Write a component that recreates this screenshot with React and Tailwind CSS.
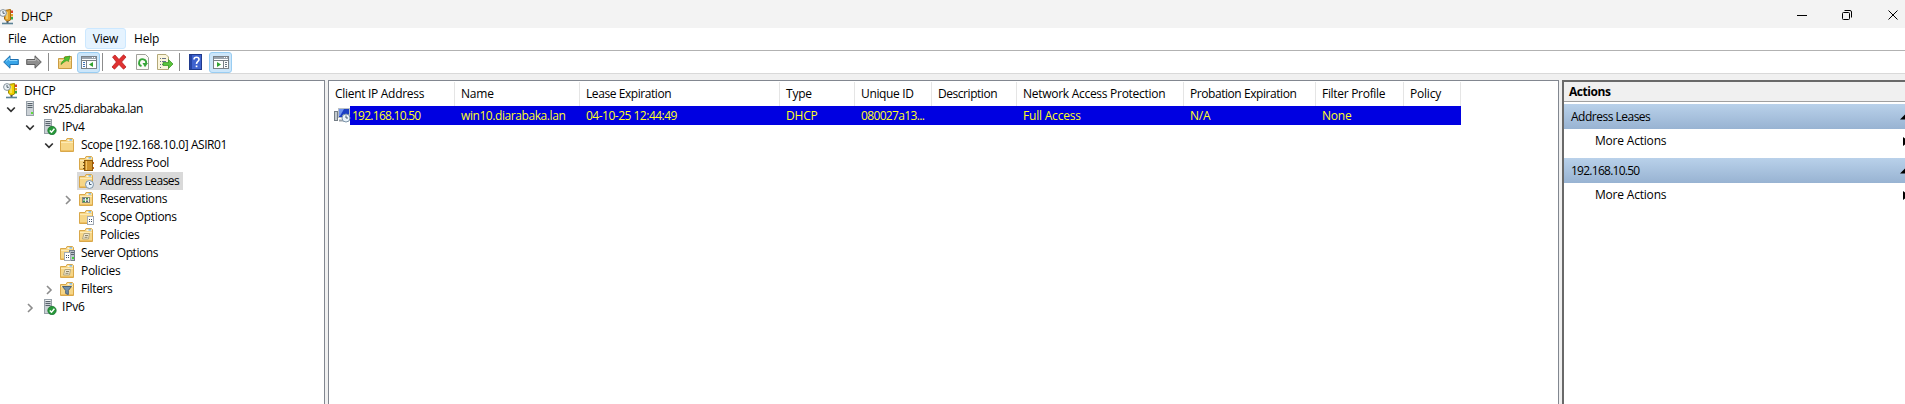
const tracking = {
  "192.168.10.50": "tracking-[-0.74px]",
  "04-10-25 12:44:49": "tracking-[-0.5px]",
  "win10.diarabaka.lan": "tracking-[-0.42px]",
  "080027a13...": "tracking-[-0.65px]",
  "srv25.diarabaka.lan": "tracking-[-0.5px]",
  "Scope [192.168.10.0] ASIR01": "tracking-[-0.43px]",
  "Address Pool": "tracking-[-0.35px]",
  "Address Leases": "tracking-[-0.5px]",
  "Reservations": "tracking-[-0.4px]",
  "Scope Options": "tracking-[-0.33px]",
  "Server Options": "tracking-[-0.45px]",
  "Policies": "tracking-[-0.3px]",
  "Filters": "tracking-[-0.35px]",
  "Client IP Address": "tracking-[-0.3px]",
  "Lease Expiration": "tracking-[-0.43px]",
  "Unique ID": "tracking-[-0.35px]",
  "Description": "tracking-[-0.45px]",
  "Network Access Protection": "tracking-[-0.28px]",
  "Probation Expiration": "tracking-[-0.44px]",
  "Filter Profile": "tracking-[-0.3px]",
};

const T = ({ children, className = "" }) => (
  <span className={"whitespace-pre leading-[18px] " + (tracking[children] || "") + " " + className}>{children}</span>
);

const Svg = ({ w = 16, h = 16, children, className = "" }) => (
  <svg width={w} height={h} viewBox={`0 0 ${w} ${h}`} className={"shrink-0 " + className}>{children}</svg>
);

const FolderShape = () => (
  <>
    <path d="M1.5 3.5 L1.5 14.5 L14.5 14.5 L14.5 2.5 L13.5 1.5 L8 1.5 L7 3.5 Z" fill="#f6d687" stroke="#d9a84a" />
    <path d="M8.500 2.500 h5 v1.500 h-5z" fill="#fdf6df" />
    <path d="M10.500 2.300 h2.500 v1.200 h-2.500z" fill="#5aa7e8" />
    <path d="M2 5.500 H14" stroke="#fdeab5" />
    <path d="M2 13.500 H14" stroke="#eebf62" />
  </>
);

const Clock = ({ cx, cy, r = 4 }) => (
  <>
    <circle cx={cx} cy={cy} r={r} fill="#eaf4fc" stroke="#7c93a8" />
    <path d={`M${cx} ${cy - r + 1.500} V${cy} H${cx + 2}`} stroke="#34495e" fill="none" strokeWidth="0.900" />
  </>
);

const Folder = ({ kind }) => (
  <Svg>
    <FolderShape />
    {kind === "pool" && (
      <>
        <rect x="6.500" y="5.500" width="8" height="10" fill="#d0932c" stroke="#8d5a0c" />
        <path d="M8.500 6 V15" stroke="#f3c566" />
        <path d="M15.500 7 v2 M15.500 12 v2" stroke="#c8641e" />
        <path d="M5 7.500 h2 M5 10.500 h2 M5 13.500 h2" stroke="#6d4a12" />
      </>
    )}
    {kind === "lease" && <Clock cx={11.5} cy={11.5} />}
    {kind === "res" && (
      <>
        <rect x="4.500" y="6.500" width="7" height="5" fill="#eef1ea" stroke="#8a8a78" />
        <rect x="5" y="7" width="2" height="1.500" fill="#4b6a96" />
        <rect x="8" y="7" width="2" height="1.500" fill="#35903a" />
        <rect x="5" y="9.500" width="2" height="1.500" fill="#2f9440" />
        <rect x="8" y="9.500" width="2" height="1.500" fill="#56657d" />
      </>
    )}
    {(kind === "opt" || kind === "srvopt") && (
      <>
        {kind === "srvopt" && (
          <>
            <rect x="10.500" y="5.500" width="5" height="10" fill="#b9c3cb" stroke="#75818b" />
            <path d="M12 7.500h3M12 9.500h3" stroke="#59636c" />
            <rect x="13" y="12" width="2" height="2" fill="#41d13d" />
          </>
        )}
        <g transform={kind === "srvopt" ? "translate(-4 0)" : ""}>
          <rect x="9.500" y="7.500" width="6" height="8" fill="#fff" stroke="#a3abb5" />
          <path d="M11 10.500h1M13 10.500h1M11 12.500h1M13 12.500h1" stroke="#3d4d66" />
        </g>
      </>
    )}
    {kind === "pol" && (
      <>
        <path d="M6 6.500 H11.500 L10.500 12 H4.500 Z" fill="#f2ead2" stroke="#b3a680" />
        <path d="M7 8.500 h3 M6.500 10.300 h3" stroke="#8d8264" />
      </>
    )}
    {kind === "filter" && (
      <path d="M3.500 5.500 H12.500 L9.300 9.500 V13.500 L6.700 12.500 V9.500 Z" fill="#7391ad" stroke="#3f566d" strokeWidth="0.900" />
    )}
  </Svg>
);

const Tower = () => (
  <>
    <rect x="1.500" y="0.500" width="7" height="14" fill="#cbd1d6" stroke="#98a1a9" />
    <path d="M2.500 2.500h5M2.500 4.500h5M2.500 6.500h5" stroke="#59636c" />
    <path d="M2.500 1.500h5" stroke="#f1f4f6" />
    <rect x="6" y="11" width="2" height="2" fill="#5fdd3a" />
  </>
);

const Server = ({ check }) => (
  <Svg w={check ? 14 : 10}>
    <Tower />
    {check && (
      <>
        <circle cx="9" cy="11.500" r="4.200" fill="#27983a" stroke="#12702a" strokeWidth="0.700" />
        <path d="M6.800 11.500 L8.500 13.300 L11.400 9.800" stroke="#fff" strokeWidth="1.400" fill="none" />
      </>
    )}
  </Svg>
);

const DhcpIcon = ({ gold = "#f0d000", edge = "#a08c00" }) => (
  <Svg>
    <path d="M5.500 1.500 L11.500 0.500 V11 L8 12.500 L5.500 10 Z" fill={gold} stroke={edge} />
    <path d="M8 3 V10" stroke="#fff0a0" />
    <rect x="12" y="1.500" width="2" height="2.500" fill="#d9412b" />
    <rect x="12" y="5" width="2" height="2.500" fill="#e8a023" />
    <rect x="12" y="8" width="2" height="2.500" fill="#3ba542" />
    <path d="M8.500 12 V14" stroke="#555" strokeWidth="2" />
    <path d="M3 14.500 H14" stroke="#5b8296" strokeWidth="1.600" />
    <circle cx="4" cy="4" r="3.400" fill="#edf3f7" stroke="#86929b" />
    <path d="M4 2 V4.300 H5.800" stroke="#43525c" fill="none" strokeWidth="0.900" />
  </Svg>
);

const Chevron = ({ open }) => (
  <Svg w={10} h={10} className="mt-[2px]">
    {open ? (
      <path d="M1.200 2.500 L5 6.300 L8.800 2.500" fill="none" stroke="#303030" strokeWidth="1.700" />
    ) : (
      <path d="M3 1 L7 5 L3 9" fill="none" stroke="#8c8c8c" strokeWidth="1.600" />
    )}
  </Svg>
);

const tree = [
  { pad: "pl-[6px]", open: true, icon: <Server />, text: "srv25.diarabaka.lan", iconBox: "w-[17px] pl-[4px]" },
  { pad: "pl-[25px]", open: true, icon: <Server check />, text: "IPv4", iconBox: "w-[17px] pl-[3px]" },
  { pad: "pl-[44px]", open: true, icon: <Folder />, text: "Scope [192.168.10.0] ASIR01" },
  { pad: "pl-[63px]", icon: <Folder kind="pool" />, text: "Address Pool" },
  { pad: "pl-[63px]", icon: <Folder kind="lease" />, text: "Address Leases", selected: true },
  { pad: "pl-[63px]", open: false, icon: <Folder kind="res" />, text: "Reservations" },
  { pad: "pl-[63px]", icon: <Folder kind="opt" />, text: "Scope Options" },
  { pad: "pl-[63px]", icon: <Folder kind="pol" />, text: "Policies" },
  { pad: "pl-[44px]", icon: <Folder kind="srvopt" />, text: "Server Options" },
  { pad: "pl-[44px]", icon: <Folder kind="pol" />, text: "Policies" },
  { pad: "pl-[44px]", open: false, icon: <Folder kind="filter" />, text: "Filters" },
  { pad: "pl-[25px]", open: false, icon: <Server check />, text: "IPv6", iconBox: "w-[17px] pl-[3px]" },
];

const columns = [
  { w: "w-[126px]", name: "Client IP Address", value: "192.168.10.50" },
  { w: "w-[125px]", name: "Name", value: "win10.diarabaka.lan" },
  { w: "w-[200px]", name: "Lease Expiration", value: "04-10-25 12:44:49" },
  { w: "w-[75px]", name: "Type", value: "DHCP" },
  { w: "w-[77px]", name: "Unique ID", value: "080027a13..." },
  { w: "w-[85px]", name: "Description", value: "" },
  { w: "w-[167px]", name: "Network Access Protection", value: "Full Access" },
  { w: "w-[132px]", name: "Probation Expiration", value: "N/A" },
  { w: "w-[88px]", name: "Filter Profile", value: "None" },
  { w: "w-[57px]", name: "Policy", value: "" },
];

const Separator = ({ className }) => <div className={"h-[18px] w-px shrink-0 bg-[#8c8c8c] " + className} />;

const PaneIcon = ({ right }) => (
  <Svg>
    <rect x="0.500" y="2.500" width="15" height="12" fill="#fdfdfd" stroke="#7a8188" />
    <rect x="1" y="3" width="14" height="2" fill="#99a3ad" />
    <path d="M11 3.500h1M13 3.500h1" stroke="#fff" />
    <path d="M1 6.500H15" stroke="#7a8188" />
    {right ? (
      <>
        <path d="M10.500 7V14" stroke="#7a8188" />
        <path d="M4 8 L8 10.500 L4 13 Z" fill="#2fa32f" />
        <path d="M12 8.500h2M12 10.500h2M12 12.500h2" stroke="#6b7680" />
      </>
    ) : (
      <>
        <path d="M5.500 7V14" stroke="#7a8188" />
        <path d="M12 8 L8 10.500 L12 13 Z" fill="#2fa32f" />
        <path d="M2 8.500h2M2 10.500h2M2 12.500h2" stroke="#3f74b8" />
      </>
    )}
  </Svg>
);

const ArrowIcon = ({ forward, className = "" }) => (
  <Svg className={className}>
    <g transform={forward ? "translate(16 0) scale(-1 1)" : ""}>
      <path d="M0.700 8 L7 1.800 V5.500 H15.300 V10.500 H7 V14.200 Z" fill={forward ? "#8d8d8d" : "#39a5e8"} stroke={forward ? "#5f5f5f" : "#1b6fb0"} />
      <path d="M3 7.300 L6.500 4.300 V6.500 H14.300" fill="none" stroke={forward ? "#b9b9b9" : "#8ad4fa"} />
    </g>
  </Svg>
);

const Toolbar = () => (
  <div className="flex h-[22px] shrink-0 items-center bg-white pl-[3px]">
    <ArrowIcon />
    <ArrowIcon forward className="ml-[7px]" />
    <Separator className="ml-[6px]" />
    <Svg className="ml-[9px]">
      <path d="M0.500 4.500 H6 L7 2.500 H13.500 V14.500 H0.500 Z" fill="#f2cf7c" stroke="#c99c44" />
      <path d="M1 6.500H13" stroke="#fbe7b0" />
      <path d="M3 10.500 C3.500 8 5 6.500 7 5.500 L6 3.500 L12 2 L10.500 7.500 L9 6.500 C6.500 7.500 5 9 3 10.500 Z" fill="#4fc22e" stroke="#2b8a18" strokeWidth="0.600" />
    </Svg>
    <div className="ml-[3px] flex h-[21px] w-[23px] shrink-0 items-center justify-center rounded-[3px] border border-[#99cdf2] bg-[#cce6fa]"><PaneIcon /></div>
    <Separator className="ml-[2px]" />
    <Svg className="ml-[8px]">
      <path d="M1.500 3 L4 1 L8 5.500 L12.500 0.800 L15 3 L10.600 8 L15 13 L12.500 15.200 L8 10.500 L3.500 15.200 L1 13 L5.400 8 Z" fill="#e03131" stroke="#b01515" strokeWidth="0.700" />
    </Svg>
    <Svg className="ml-[8px]">
      <path d="M1.500 0.500 H10.500 L13.500 3.500 V15.500 H1.500 Z" fill="#fbfbf7" stroke="#a0a09a" />
      <path d="M6.500 12 A3.500 3.500 0 1 1 11 9.500" fill="none" stroke="#37a53a" strokeWidth="1.900" />
      <path d="M7.500 9 H13 L10 13.200 Z" fill="#37a53a" />
    </Svg>
    <Svg w={17} className="ml-[6px]">
      <path d="M0.500 0.500 H9 L11.500 3 V15.500 H0.500 Z" fill="#fcf6dc" stroke="#b3a878" />
      <path d="M3 4.500h1M5 4.500h4M3 7.500h1M5 7.500h4M3 10.500h1M5 10.500h3M3 13.500h1" stroke="#67738a" />
      <path d="M6 8.500 H11.500 V5.500 L16 10 L11.500 14.500 V11.500 H6 Z" fill="#5ac43a" stroke="#2f8f1c" strokeWidth="0.700" />
    </Svg>
    <Separator className="ml-[5px]" />
    <Svg w={14} className="ml-[9px]">
      <rect x="0.500" y="0.500" width="12" height="15" fill="#3f63cf" stroke="#203a8c" />
      <path d="M2 1V15" stroke="#1f3a96" strokeWidth="1.500" />
      <path d="M5 5.500 C5 2.500 10 2.500 10 5.500 C10 7.500 7.500 7.500 7.500 10" fill="none" stroke="#fff" strokeWidth="1.600" />
      <rect x="6.700" y="11.500" width="1.700" height="1.700" fill="#fff" />
    </Svg>
    <div className="ml-[6px] flex h-[21px] w-[23px] shrink-0 items-center justify-center rounded-[3px] border border-[#99cdf2] bg-[#cce6fa]"><PaneIcon right /></div>
  </div>
);

const ActionGroup = ({ title }) => (
  <>
    <div className="flex h-[25px] items-center justify-between bg-linear-to-b from-[#b9d1ea] to-[#98b3d2] pl-[7px]">
      <T>{title}</T>
      <Svg w={5} h={6}><path d="M0 5.500 L5 0.500 V5.500 Z" fill="#000" /></Svg>
    </div>
    <div className="mb-[5px] flex h-[24px] items-center justify-between pl-[31px]">
      <T>More Actions</T>
      <Svg w={2} h={9}><path d="M0 0 L2 1.500 V7.500 L0 9 Z" fill="#000" /></Svg>
    </div>
  </>
);

export default function App() {
  return (
    <div className="flex h-[404px] w-[1905px] flex-col overflow-hidden bg-[#f0f0f0] font-['Open_Sans','Noto_Sans',sans-serif] text-[12px] tracking-[-0.2px] text-black">
      <div className="flex h-[28px] shrink-0 items-center justify-between bg-[#f3f3f3]">
        <div className="flex items-center gap-[6px] pt-[5px]">
          <div className="-ml-px"><DhcpIcon gold="#e5a42a" edge="#a5690c" /></div>
          <T>DHCP</T>
        </div>
        <div className="flex items-center pt-[2px] pr-[7px]">
          <Svg w={10} h={10} className="mr-[35px]"><path d="M0 5.500H10" stroke="#000" /></Svg>
          <Svg w={10} h={10} className="mr-[36px]">
            <rect x="0.500" y="2.500" width="7" height="7" rx="1" fill="none" stroke="#000" />
            <path d="M2.500 0.500 H8 Q9.500 0.500 9.500 2 V7.500" fill="none" stroke="#000" />
          </Svg>
          <Svg w={10} h={10}><path d="M0.500 0.500 L9.500 9.500 M9.500 0.500 L0.500 9.500" stroke="#000" /></Svg>
        </div>
      </div>
      <div className="flex h-[23px] shrink-0 items-start border-b border-[#b2b2b2] bg-white">
        <div className="flex h-[22px] w-[34px] items-center pl-[8px]"><T>File</T></div>
        <div className="flex h-[22px] w-[51px] items-center pl-[8px]"><T>Action</T></div>
        <div className="flex h-[21px] w-[41px] items-center justify-center rounded-[3px] border border-[#cce8ff] bg-[#e5f3ff] pt-px"><T>View</T></div>
        <div className="flex h-[22px] items-center pl-[8px]"><T>Help</T></div>
      </div>
      <Toolbar />
      <div className="h-px shrink-0 bg-[#d9d9d9]" />
      <div className="flex min-h-0 flex-1 pt-[6px]">
        <div className="w-[325px] shrink-0 border-t border-r border-[#828790] bg-white pt-[1px]">
          <div className="flex h-[18px] items-center pl-[3px]">
            <DhcpIcon />
            <T className="ml-[5px]">DHCP</T>
          </div>
          {tree.map((n, i) => (
            <div key={i} className={"flex h-[18px] items-center " + n.pad}>
              <div className="w-[10px] shrink-0">{n.open !== undefined && <Chevron open={n.open} />}</div>
              <div className={"flex h-[18px] items-center " + (n.selected ? "ml-[4px] w-[106px] bg-[#d9d9d9] pl-px" : "pl-[5px]")}>
                <div className={"flex shrink-0 " + (n.iconBox || "w-[17px]")}>{n.icon}</div>
                <T className="ml-[5px]">{n.text}</T>
              </div>
            </div>
          ))}
        </div>
        <div className="ml-[3px] w-[1231px] shrink-0 border-x border-t border-[#828790] bg-white">
          <div className="flex h-[25px] pt-[1px]">
            {columns.map((c) => (
              <div key={c.name} className={"flex shrink-0 items-center border-r border-[#e5e5e5] pl-[6px] " + c.w}><T>{c.name}</T></div>
            ))}
          </div>
          <div className="flex h-[19px] w-[1132px] bg-[linear-gradient(90deg,transparent_21px,#0000e1_21px)] text-[#ffff1e]">
            <Svg w={17} className="mt-[1px] ml-[5px]">
              <rect x="0.500" y="4.500" width="3" height="9" fill="#c4cacf" stroke="#747d85" />
              <rect x="4.500" y="1.500" width="11" height="9" fill="#1c3fc4" stroke="#b9c0c6" />
              <path d="M5 2 H10 L6 9 H5Z" fill="#6f93ee" />
              <path d="M5 13.500 H11" stroke="#9aa2a9" strokeWidth="2" />
              <Clock cx={12} cy={11} r={4} />
            </Svg>
            {columns.map((c, i) => (
              <div key={c.name} className={"flex shrink-0 items-center " + (i === 0 ? "w-[104px] pl-[1px]" : "pl-[6px] " + c.w)}><T>{c.value}</T></div>
            ))}
          </div>
        </div>
        <div className="ml-[3px] flex-1 border-t-2 border-l-2 border-[#696969] bg-white">
          <div className="flex h-[20px] items-center border-b border-[#a0a0a0] bg-[#f0f0f0] pt-px pl-[5px] font-bold tracking-[-0.45px]"><T>Actions</T></div>
          <div className="pt-[2px]">
            <ActionGroup title="Address Leases" />
            <ActionGroup title="192.168.10.50" />
          </div>
        </div>
      </div>
    </div>
  );
}
